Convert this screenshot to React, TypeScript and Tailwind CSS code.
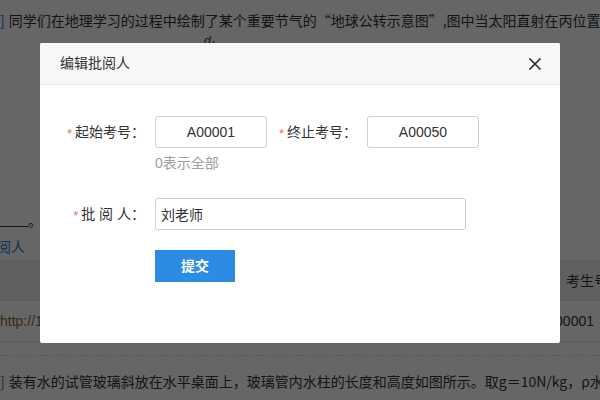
import React from "react";

function Label({ text }: { text: string }) {
  return (
    <div className="flex items-center justify-end text-[14px] text-[#333]">
      <span className="text-[#f56c6c] mr-[3px] text-[13px] leading-none relative top-[1px]">*</span>
      <span className="whitespace-pre">{text}</span>
    </div>
  );
}

const cjk = { fontFamily: '"Noto Sans CJK SC", "Liberation Sans", sans-serif' };

export default function App() {
  return (
    <div
      className="relative w-[600px] h-[400px] overflow-hidden bg-white"
      style={{ fontFamily: '"Liberation Sans", "Noto Sans CJK SC", sans-serif' }}
    >
      {/* underlying page */}
      <div className="flex flex-col w-full text-[14px] text-[#333]">
        <div className="h-[40px] flex items-center whitespace-nowrap pt-[1px]" style={cjk}>
          <span className="text-[#2b7bd0] mr-[4px]">]</span>
          <span>同学们在地理学习的过程中绘制了某个重要节气的“地球公转示意图”,图中当太阳直射在丙位置时</span>
        </div>
        <div className="h-[170px] relative">
          <span className="absolute left-[188px] top-[5px] w-[10px] border-b border-[#333]"></span>
          <span className="absolute left-[204px] top-[-8px] italic text-[12px]">d<sub>1</sub></span>
        </div>
        <div className="h-[22px] flex items-end whitespace-nowrap">
          <span className="inline-block w-[28px] border-b border-[#333] mb-[5px]"></span>
          <span>。</span>
        </div>
        <div className="h-[28px] flex items-center text-[#2b7bd0] -ml-[17px] whitespace-nowrap" style={cjk}>批阅人</div>
        <div className="h-[41px] bg-[#f0f0f0] border-y border-[#e8e8e8] flex items-center justify-end whitespace-nowrap" style={cjk}>
          <span className="mr-[-8px]">考生号</span>
        </div>
        <div className="h-[41px] border-b border-[#e8e8e8] flex items-center justify-between whitespace-nowrap">
          <span className="text-[#8a6a2c]">http://1</span>
          <span className="mr-[6px]">A00001</span>
        </div>
        <div className="h-[14px] border-b border-dashed border-[#ddd]"></div>
        <div className="h-[36px] flex items-end whitespace-nowrap" style={cjk}>
          <span className="text-[#2b7bd0] mr-[4px]">]</span>
          <span>装有水的试管玻璃斜放在水平桌面上，玻璃管内水柱的长度和高度如图所示。取g＝10N/kg，ρ水＝1.0×10³kg/m³</span>
        </div>
      </div>

      {/* overlay */}
      <div className="absolute inset-0 bg-black/60"></div>

      {/* modal */}
      <div className="absolute left-[40px] top-[43px] w-[520px] h-[300px] bg-white rounded-[2px] flex flex-col">
        <div className="h-[42px] bg-[#f7f7f7] border-b border-[#ebebeb] flex items-center justify-between pl-[20px] pr-[19px] rounded-t-[2px]">
          <span className="text-[14px] text-[#333]">编辑批阅人</span>
          <svg width="12" height="12" viewBox="0 0 12 12" className="text-[#303133]">
            <path d="M1 1L11 11M11 1L1 11" stroke="currentColor" strokeWidth="1.6" strokeLinecap="square" />
          </svg>
        </div>
        <div className="flex flex-col pt-[31px]">
          <div className="flex items-center">
            <div className="w-[105px]">
              <Label text="起始考号：" />
            </div>
            <input
              readOnly
              value="A00001"
              className="ml-[10px] w-[112px] h-[32px] border border-[#d0d0d0] rounded-[3px] text-center text-[14px] text-[#333] outline-none"
            />
            <div className="w-[90px]">
              <Label text="终止考号：" />
            </div>
            <input
              readOnly
              value="A00050"
              className="ml-[10px] w-[112px] h-[32px] border border-[#d0d0d0] rounded-[3px] text-center text-[14px] text-[#333] outline-none"
            />
          </div>
          <div className="ml-[115px] mt-[5px] text-[14px] text-[#a0a0a0] leading-[20px]">0表示全部</div>
          <div className="flex items-center mt-[25px]">
            <div className="w-[105px]">
              <Label text="批 阅 人：" />
            </div>
            <input
              readOnly
              value="刘老师"
              className="ml-[10px] w-[311px] h-[32px] border border-[#d0d0d0] rounded-[3px] pl-[5px] text-[14px] text-[#333] outline-none"
            />
          </div>
          <div className="ml-[115px] mt-[20px]">
            <button className="w-[80px] h-[32px] bg-[#2b8ce3] text-white text-[14px] font-bold">提交</button>
          </div>
        </div>
      </div>
    </div>
  );
}
